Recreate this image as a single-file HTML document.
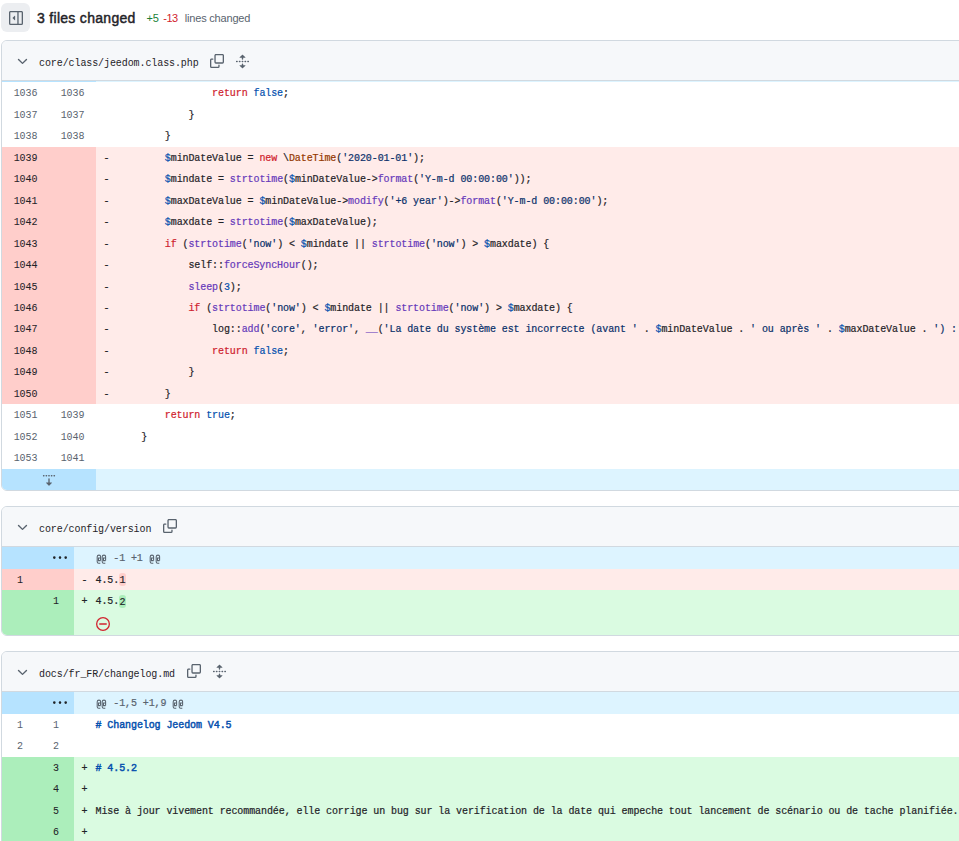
<!DOCTYPE html>
<html><head><meta charset="utf-8"><style>
*{box-sizing:border-box}
html,body{margin:0;padding:0}
body{width:959px;height:841px;overflow:hidden;background:#fff;position:relative;font-family:"Liberation Sans",sans-serif;color:#1f2328}
.tog{position:absolute;left:1px;top:3px;width:29px;height:29px;border-radius:6px;background:#eceef1}
.tog svg{position:absolute;left:8px;top:8px}
.title{position:absolute;left:37px;top:8px;font-size:14px;font-weight:normal;-webkit-text-stroke:0.45px #1f2328;line-height:20px;white-space:nowrap;letter-spacing:0.3px}
.stats{position:absolute;left:146px;top:10px;font-size:11px;line-height:16px;white-space:nowrap}
.stats .p{color:#1a7f37;margin-left:0.6px;letter-spacing:-0.2px} .stats .m{color:#d1242f;margin-left:4.4px;letter-spacing:-0.4px} .stats .l{color:#59636e;margin-left:7px;letter-spacing:-0.2px}
.file{position:absolute;left:1px;width:1400px;border:1px solid #d1d9e0;border-radius:6px;overflow:hidden;background:#fff}
.fh{position:absolute;left:0;top:0;right:0;height:40px;background:#f6f8fa;border-bottom:1px solid #d1d9e0}
.chev{position:absolute;left:12.5px;top:12.6px}
.chev svg{display:block}
.path{position:absolute;left:37px;top:3px;line-height:39px;font-family:"Liberation Mono",monospace;font-size:10px;letter-spacing:-0.09px;white-space:pre;color:#1f2328}
.ico{position:absolute;top:12.2px}
.ico svg{display:block}
.row{position:absolute;left:0;right:0;background:#fff}
.g{position:absolute;left:0;top:0;bottom:0}
.n,.mk,.code{position:absolute;top:1px;-webkit-text-stroke:0.2px currentColor;line-height:21.5px;font-family:"Liberation Mono",monospace;font-size:10px;letter-spacing:-0.09px;white-space:pre}
.n{text-align:center;color:#59636e;-webkit-text-stroke:0}
.code{color:#1f2328}
.mk{color:#1f2328;margin-left:0.5px}
.del{background:#ffebe9} .del .g{background:#ffcecb} .del .n{color:#1f2328;-webkit-text-stroke:0.05px currentColor}
.add{background:#dafbe1} .add .g{background:#aceebb} .add .n{color:#1f2328;-webkit-text-stroke:0.05px currentColor}
.hunk{background:#ddf4ff} .hunk .g{background:#b6e3ff} .hunk .code{color:#59636e}
.kebab{position:absolute;top:3.8px} .kebab svg{display:block}
.fd{position:absolute;left:40px;top:3.2px} .fd svg{display:block}
.k{color:#cf222e} .f{color:#6639ba} .s{color:#0a3069} .v{color:#0550ae} .c{color:#0550ae} .t{color:#953800}
.h{color:#0550ae;font-weight:normal;-webkit-text-stroke:0.45px currentColor}
.at{display:inline-block;width:5.91px;height:10px;vertical-align:-2.5px} .at svg{display:block}
.wd{background:#ffcecb;border-radius:3px;padding:1.5px 0.3px 0.5px} .wa{background:#aceebb;border-radius:3px;padding:1.5px 0.3px 0.5px}
.ne{position:absolute;left:94px;top:27px} .ne svg{display:block}
</style></head>
<body>
<div class="tog"><svg width="14" height="14" viewBox="0 0 16 16"><path fill="#59636e" d="M4.177 7.823 6.573 5.427A.25.25 0 0 1 7 5.604v4.792a.25.25 0 0 1-.427.177L4.177 8.177a.25.25 0 0 1 0-.354Z"/><path fill="#59636e" d="M0 1.75C0 .784.784 0 1.75 0h12.5C15.216 0 16 .784 16 1.75v12.5A1.75 1.75 0 0 1 14.25 16H1.75A1.75 1.75 0 0 1 0 14.25Zm1.75-.25a.25.25 0 0 0-.25.25v12.5c0 .138.112.25.25.25H9.5v-13Zm12.5 13a.25.25 0 0 0 .25-.25V1.75a.25.25 0 0 0-.25-.25H11v13Z"/></svg></div>
<div class="title">3 files changed</div>
<div class="stats"><span class="p">+5</span><span class="m">-13</span><span class="l">lines changed</span></div>
<div class="file" style="top:40px;height:451px"><div class="fh"><span class="chev"><svg width="15" height="15" viewBox="0 0 16 16"><path fill="#59636e" d="M12.78 5.22a.749.749 0 0 1 0 1.06l-4.25 4.25a.749.749 0 0 1-1.06 0L3.22 6.28a.749.749 0 1 1 1.06-1.06L8 8.939l3.72-3.719a.749.749 0 0 1 1.06 0Z"/></svg></span><span class="path">core/class/jeedom.class.php</span><span class="ico" style="left:208.26px;top:13.0px"><svg width="14" height="14" viewBox="0 0 16 16"><path fill="#59636e" d="M0 6.75C0 5.784.784 5 1.75 5h1.5a.75.75 0 0 1 0 1.5h-1.5a.25.25 0 0 0-.25.25v7.5c0 .138.112.25.25.25h7.5a.25.25 0 0 0 .25-.25v-1.5a.75.75 0 0 1 1.5 0v1.5A1.75 1.75 0 0 1 9.25 16h-7.5A1.75 1.75 0 0 1 0 14.25Z"/><path fill="#59636e" d="M5 1.75C5 .784 5.784 0 6.75 0h7.5C15.216 0 16 .784 16 1.75v7.5A1.75 1.75 0 0 1 14.25 11h-7.5A1.75 1.75 0 0 1 5 9.25Zm1.75-.25a.25.25 0 0 0-.25.25v7.5c0 .138.112.25.25.25h7.5a.25.25 0 0 0 .25-.25v-7.5a.25.25 0 0 0-.25-.25Z"/></svg></span><span class="ico" style="left:233.46px;top:12.8px"><svg width="15" height="15" viewBox="0 0 16 16"><path fill="#59636e" d="M8.177.677l2.896 2.896a.25.25 0 0 1-.177.427H8.75v1.25a.75.75 0 0 1-1.5 0V4H5.104a.25.25 0 0 1-.177-.427L7.823.677a.25.25 0 0 1 .354 0ZM7.25 10.75a.75.75 0 0 1 1.5 0V12h2.146a.25.25 0 0 1 .177.427l-2.896 2.896a.25.25 0 0 1-.354 0l-2.896-2.896A.25.25 0 0 1 5.104 12H7.25v-1.25Zm-5-2a.75.75 0 0 0 0-1.5h-.5a.75.75 0 0 0 0 1.5h.5ZM6 8a.75.75 0 0 1-.75.75h-.5a.75.75 0 0 1 0-1.5h.5A.75.75 0 0 1 6 8Zm2.25.75a.75.75 0 0 0 0-1.5h-.5a.75.75 0 0 0 0 1.5h.5ZM12 8a.75.75 0 0 1-.75.75h-.5a.75.75 0 0 1 0-1.5h.5A.75.75 0 0 1 12 8Zm2.25.75a.75.75 0 0 0 0-1.5h-.5a.75.75 0 0 0 0 1.5h.5Z"/></svg></span></div><div class="row hunk" style="top:40px;height:1px"><div class="g" style="width:94px"></div></div><div class="row ctx" style="top:41.000px;height:22.667px"><div class="g" style="width:94px"><span class="n" style="left:0px;width:47.0px">1036</span><span class="n" style="left:47.0px;width:47.0px">1036</span></div><span class="mk" style="left:101px"></span><div class="code" style="left:115.5px">                <span class="k">return</span> <span class="c">false</span>;</div></div><div class="row ctx" style="top:62.667px;height:22.667px"><div class="g" style="width:94px"><span class="n" style="left:0px;width:47.0px">1037</span><span class="n" style="left:47.0px;width:47.0px">1037</span></div><span class="mk" style="left:101px"></span><div class="code" style="left:115.5px">            }</div></div><div class="row ctx" style="top:84.333px;height:22.667px"><div class="g" style="width:94px"><span class="n" style="left:0px;width:47.0px">1038</span><span class="n" style="left:47.0px;width:47.0px">1038</span></div><span class="mk" style="left:101px"></span><div class="code" style="left:115.5px">        }</div></div><div class="row del" style="top:106.000px;height:22.417px"><div class="g" style="width:94px"><span class="n" style="left:0px;width:47.0px">1039</span><span class="n" style="left:47.0px;width:47.0px"></span></div><span class="mk" style="left:101px">-</span><div class="code" style="left:115.5px">        <span class="v">$</span>minDateValue = <span class="k">new</span> \<span class="t">DateTime</span>(<span class="s">'2020-01-01'</span>);</div></div><div class="row del" style="top:127.417px;height:22.417px"><div class="g" style="width:94px"><span class="n" style="left:0px;width:47.0px">1040</span><span class="n" style="left:47.0px;width:47.0px"></span></div><span class="mk" style="left:101px">-</span><div class="code" style="left:115.5px">        <span class="v">$</span>mindate = <span class="f">strtotime</span>(<span class="v">$</span>minDateValue-&gt;<span class="f">format</span>(<span class="s">'Y-m-d 00:00:00'</span>));</div></div><div class="row del" style="top:148.833px;height:22.417px"><div class="g" style="width:94px"><span class="n" style="left:0px;width:47.0px">1041</span><span class="n" style="left:47.0px;width:47.0px"></span></div><span class="mk" style="left:101px">-</span><div class="code" style="left:115.5px">        <span class="v">$</span>maxDateValue = <span class="v">$</span>minDateValue-&gt;<span class="f">modify</span>(<span class="s">'+6 year'</span>)-&gt;<span class="f">format</span>(<span class="s">'Y-m-d 00:00:00'</span>);</div></div><div class="row del" style="top:170.250px;height:22.417px"><div class="g" style="width:94px"><span class="n" style="left:0px;width:47.0px">1042</span><span class="n" style="left:47.0px;width:47.0px"></span></div><span class="mk" style="left:101px">-</span><div class="code" style="left:115.5px">        <span class="v">$</span>maxdate = <span class="f">strtotime</span>(<span class="v">$</span>maxDateValue);</div></div><div class="row del" style="top:191.667px;height:22.417px"><div class="g" style="width:94px"><span class="n" style="left:0px;width:47.0px">1043</span><span class="n" style="left:47.0px;width:47.0px"></span></div><span class="mk" style="left:101px">-</span><div class="code" style="left:115.5px">        <span class="k">if</span> (<span class="f">strtotime</span>(<span class="s">'now'</span>) &lt; <span class="v">$</span>mindate || <span class="f">strtotime</span>(<span class="s">'now'</span>) &gt; <span class="v">$</span>maxdate) {</div></div><div class="row del" style="top:213.083px;height:22.417px"><div class="g" style="width:94px"><span class="n" style="left:0px;width:47.0px">1044</span><span class="n" style="left:47.0px;width:47.0px"></span></div><span class="mk" style="left:101px">-</span><div class="code" style="left:115.5px">            self::<span class="f">forceSyncHour</span>();</div></div><div class="row del" style="top:234.500px;height:22.417px"><div class="g" style="width:94px"><span class="n" style="left:0px;width:47.0px">1045</span><span class="n" style="left:47.0px;width:47.0px"></span></div><span class="mk" style="left:101px">-</span><div class="code" style="left:115.5px">            <span class="f">sleep</span>(<span class="c">3</span>);</div></div><div class="row del" style="top:255.917px;height:22.417px"><div class="g" style="width:94px"><span class="n" style="left:0px;width:47.0px">1046</span><span class="n" style="left:47.0px;width:47.0px"></span></div><span class="mk" style="left:101px">-</span><div class="code" style="left:115.5px">            <span class="k">if</span> (<span class="f">strtotime</span>(<span class="s">'now'</span>) &lt; <span class="v">$</span>mindate || <span class="f">strtotime</span>(<span class="s">'now'</span>) &gt; <span class="v">$</span>maxdate) {</div></div><div class="row del" style="top:277.333px;height:22.417px"><div class="g" style="width:94px"><span class="n" style="left:0px;width:47.0px">1047</span><span class="n" style="left:47.0px;width:47.0px"></span></div><span class="mk" style="left:101px">-</span><div class="code" style="left:115.5px">                log::<span class="f">add</span>(<span class="s">'core'</span>, <span class="s">'error'</span>, <span class="f">__</span>(<span class="s">'La date du système est incorrecte (avant '</span> . <span class="v">$</span>minDateValue . <span class="s">' ou après '</span> . <span class="v">$</span>maxDateValue . <span class="s">') :'</span> . <span class="f">date</span>(<span class="s">'Y-m-d H:i:s'</span>), <span class="s">'jeedom'</span>));</div></div><div class="row del" style="top:298.750px;height:22.417px"><div class="g" style="width:94px"><span class="n" style="left:0px;width:47.0px">1048</span><span class="n" style="left:47.0px;width:47.0px"></span></div><span class="mk" style="left:101px">-</span><div class="code" style="left:115.5px">                <span class="k">return</span> <span class="c">false</span>;</div></div><div class="row del" style="top:320.167px;height:22.417px"><div class="g" style="width:94px"><span class="n" style="left:0px;width:47.0px">1049</span><span class="n" style="left:47.0px;width:47.0px"></span></div><span class="mk" style="left:101px">-</span><div class="code" style="left:115.5px">            }</div></div><div class="row del" style="top:341.583px;height:22.417px"><div class="g" style="width:94px"><span class="n" style="left:0px;width:47.0px">1050</span><span class="n" style="left:47.0px;width:47.0px"></span></div><span class="mk" style="left:101px">-</span><div class="code" style="left:115.5px">        }</div></div><div class="row ctx" style="top:363.000px;height:22.667px"><div class="g" style="width:94px"><span class="n" style="left:0px;width:47.0px">1051</span><span class="n" style="left:47.0px;width:47.0px">1039</span></div><span class="mk" style="left:101px"></span><div class="code" style="left:115.5px">        <span class="k">return</span> <span class="c">true</span>;</div></div><div class="row ctx" style="top:384.667px;height:22.667px"><div class="g" style="width:94px"><span class="n" style="left:0px;width:47.0px">1052</span><span class="n" style="left:47.0px;width:47.0px">1040</span></div><span class="mk" style="left:101px"></span><div class="code" style="left:115.5px">    }</div></div><div class="row ctx" style="top:406.333px;height:22.667px"><div class="g" style="width:94px"><span class="n" style="left:0px;width:47.0px">1053</span><span class="n" style="left:47.0px;width:47.0px">1041</span></div><span class="mk" style="left:101px"></span><div class="code" style="left:115.5px"></div></div><div class="row hunk" style="top:428.000px;height:21.000px"><div class="g" style="width:94px"><span class="fd"><svg width="14" height="14" viewBox="0 0 16 16"><path fill="#59636e" d="m8.177 15.6 3.1-3.1a.25.25 0 0 0-.177-.427H8.75V7.764a.75.75 0 1 0-1.5 0V12.07H4.9a.25.25 0 0 0-.177.427l3.1 3.1a.25.25 0 0 0 .354 0ZM2.25 5a.75.75 0 0 0 0-1.5h-.5a.75.75 0 0 0 0 1.5h.5ZM6 4.25a.75.75 0 0 1-.75.75h-.5a.75.75 0 0 1 0-1.5h.5a.75.75 0 0 1 .75.75ZM8.25 5a.75.75 0 0 0 0-1.5h-.5a.75.75 0 0 0 0 1.5h.5ZM12 4.25a.75.75 0 0 1-.75.75h-.5a.75.75 0 0 1 0-1.5h.5a.75.75 0 0 1 .75.75Zm2.25.75a.75.75 0 0 0 0-1.5h-.5a.75.75 0 0 0 0 1.5h.5Z"/></svg></span></div></div></div><div class="file" style="top:506px;height:130px"><div class="fh"><span class="chev"><svg width="15" height="15" viewBox="0 0 16 16"><path fill="#59636e" d="M12.78 5.22a.749.749 0 0 1 0 1.06l-4.25 4.25a.749.749 0 0 1-1.06 0L3.22 6.28a.749.749 0 1 1 1.06-1.06L8 8.939l3.72-3.719a.749.749 0 0 1 1.06 0Z"/></svg></span><span class="path">core/config/version</span><span class="ico" style="left:161.22px;top:12.2px"><svg width="14" height="14" viewBox="0 0 16 16"><path fill="#59636e" d="M0 6.75C0 5.784.784 5 1.75 5h1.5a.75.75 0 0 1 0 1.5h-1.5a.25.25 0 0 0-.25.25v7.5c0 .138.112.25.25.25h7.5a.25.25 0 0 0 .25-.25v-1.5a.75.75 0 0 1 1.5 0v1.5A1.75 1.75 0 0 1 9.25 16h-7.5A1.75 1.75 0 0 1 0 14.25Z"/><path fill="#59636e" d="M5 1.75C5 .784 5.784 0 6.75 0h7.5C15.216 0 16 .784 16 1.75v7.5A1.75 1.75 0 0 1 14.25 11h-7.5A1.75 1.75 0 0 1 5 9.25Zm1.75-.25a.25.25 0 0 0-.25.25v7.5c0 .138.112.25.25.25h7.5a.25.25 0 0 0 .25-.25v-7.5a.25.25 0 0 0-.25-.25Z"/></svg></span></div><div class="row hunk" style="top:40.000px;height:22.667px"><div class="g" style="width:72px"><span class="kebab" style="left:51.20px"><svg width="14" height="14" viewBox="0 0 16 16"><path fill="#1f2328" d="M8 9a1.5 1.5 0 1 0 0-3 1.5 1.5 0 0 0 0 3ZM1.5 9a1.5 1.5 0 1 0 0-3 1.5 1.5 0 0 0 0 3Zm13 0a1.5 1.5 0 1 0 0-3 1.5 1.5 0 0 0 0 3Z"/></svg></span></div><div class="code" style="left:93.5px"><span class="at"><svg width="6" height="10" viewBox="0 0 6 10"><path d="M4.6 6.6V2.6Q4.6 1.1 3 1.1Q1.2 1.1 1.2 2.8V7.8Q1.2 9.3 2.7 9.3H4.3M4.6 4H2.5V6.6H4.6" fill="none" stroke="#59636e" stroke-width="1.05"/></svg></span><span class="at"><svg width="6" height="10" viewBox="0 0 6 10"><path d="M4.6 6.6V2.6Q4.6 1.1 3 1.1Q1.2 1.1 1.2 2.8V7.8Q1.2 9.3 2.7 9.3H4.3M4.6 4H2.5V6.6H4.6" fill="none" stroke="#59636e" stroke-width="1.05"/></svg></span> -1 +1 <span class="at"><svg width="6" height="10" viewBox="0 0 6 10"><path d="M4.6 6.6V2.6Q4.6 1.1 3 1.1Q1.2 1.1 1.2 2.8V7.8Q1.2 9.3 2.7 9.3H4.3M4.6 4H2.5V6.6H4.6" fill="none" stroke="#59636e" stroke-width="1.05"/></svg></span><span class="at"><svg width="6" height="10" viewBox="0 0 6 10"><path d="M4.6 6.6V2.6Q4.6 1.1 3 1.1Q1.2 1.1 1.2 2.8V7.8Q1.2 9.3 2.7 9.3H4.3M4.6 4H2.5V6.6H4.6" fill="none" stroke="#59636e" stroke-width="1.05"/></svg></span></div></div><div class="row del" style="top:61.667px;height:21.417px"><div class="g" style="width:72px"><span class="n" style="left:0px;width:36px">1</span></div><span class="mk" style="left:79px">-</span><div class="code" style="left:93.5px">4.5.<span class="wd">1</span></div></div><div class="row add" style="top:83.083px;height:44.917px"><div class="g" style="width:72px"><span class="n" style="left:36px;width:36px">1</span></div><span class="mk" style="left:79px">+</span><div class="code" style="left:93.5px">4.5.<span class="wa">2</span></div><span class="ne"><svg width="14" height="14" viewBox="0 0 16 16"><path fill="#d1242f" d="M4.25 7.25a.75.75 0 0 0 0 1.5h7.5a.75.75 0 0 0 0-1.5h-7.5Z"/><path fill="#d1242f" d="M16 8A8 8 0 1 1 0 8a8 8 0 0 1 16 0Zm-1.5 0a6.5 6.5 0 1 0-13 0 6.5 6.5 0 0 0 13 0Z"/></svg></span></div></div><div class="file" style="top:651px;height:400px"><div class="fh"><span class="chev"><svg width="15" height="15" viewBox="0 0 16 16"><path fill="#59636e" d="M12.78 5.22a.749.749 0 0 1 0 1.06l-4.25 4.25a.749.749 0 0 1-1.06 0L3.22 6.28a.749.749 0 1 1 1.06-1.06L8 8.939l3.72-3.719a.749.749 0 0 1 1.06 0Z"/></svg></span><span class="path">docs/fr_FR/changelog.md</span><span class="ico" style="left:184.74px;top:12.2px"><svg width="14" height="14" viewBox="0 0 16 16"><path fill="#59636e" d="M0 6.75C0 5.784.784 5 1.75 5h1.5a.75.75 0 0 1 0 1.5h-1.5a.25.25 0 0 0-.25.25v7.5c0 .138.112.25.25.25h7.5a.25.25 0 0 0 .25-.25v-1.5a.75.75 0 0 1 1.5 0v1.5A1.75 1.75 0 0 1 9.25 16h-7.5A1.75 1.75 0 0 1 0 14.25Z"/><path fill="#59636e" d="M5 1.75C5 .784 5.784 0 6.75 0h7.5C15.216 0 16 .784 16 1.75v7.5A1.75 1.75 0 0 1 14.25 11h-7.5A1.75 1.75 0 0 1 5 9.25Zm1.75-.25a.25.25 0 0 0-.25.25v7.5c0 .138.112.25.25.25h7.5a.25.25 0 0 0 .25-.25v-7.5a.25.25 0 0 0-.25-.25Z"/></svg></span><span class="ico" style="left:209.94px;top:12px"><svg width="15" height="15" viewBox="0 0 16 16"><path fill="#59636e" d="M8.177.677l2.896 2.896a.25.25 0 0 1-.177.427H8.75v1.25a.75.75 0 0 1-1.5 0V4H5.104a.25.25 0 0 1-.177-.427L7.823.677a.25.25 0 0 1 .354 0ZM7.25 10.75a.75.75 0 0 1 1.5 0V12h2.146a.25.25 0 0 1 .177.427l-2.896 2.896a.25.25 0 0 1-.354 0l-2.896-2.896A.25.25 0 0 1 5.104 12H7.25v-1.25Zm-5-2a.75.75 0 0 0 0-1.5h-.5a.75.75 0 0 0 0 1.5h.5ZM6 8a.75.75 0 0 1-.75.75h-.5a.75.75 0 0 1 0-1.5h.5A.75.75 0 0 1 6 8Zm2.25.75a.75.75 0 0 0 0-1.5h-.5a.75.75 0 0 0 0 1.5h.5ZM12 8a.75.75 0 0 1-.75.75h-.5a.75.75 0 0 1 0-1.5h.5A.75.75 0 0 1 12 8Zm2.25.75a.75.75 0 0 0 0-1.5h-.5a.75.75 0 0 0 0 1.5h.5Z"/></svg></span></div><div class="row hunk" style="top:40.000px;height:22.667px"><div class="g" style="width:72px"><span class="kebab" style="left:51.20px"><svg width="14" height="14" viewBox="0 0 16 16"><path fill="#1f2328" d="M8 9a1.5 1.5 0 1 0 0-3 1.5 1.5 0 0 0 0 3ZM1.5 9a1.5 1.5 0 1 0 0-3 1.5 1.5 0 0 0 0 3Zm13 0a1.5 1.5 0 1 0 0-3 1.5 1.5 0 0 0 0 3Z"/></svg></span></div><div class="code" style="left:93.5px"><span class="at"><svg width="6" height="10" viewBox="0 0 6 10"><path d="M4.6 6.6V2.6Q4.6 1.1 3 1.1Q1.2 1.1 1.2 2.8V7.8Q1.2 9.3 2.7 9.3H4.3M4.6 4H2.5V6.6H4.6" fill="none" stroke="#59636e" stroke-width="1.05"/></svg></span><span class="at"><svg width="6" height="10" viewBox="0 0 6 10"><path d="M4.6 6.6V2.6Q4.6 1.1 3 1.1Q1.2 1.1 1.2 2.8V7.8Q1.2 9.3 2.7 9.3H4.3M4.6 4H2.5V6.6H4.6" fill="none" stroke="#59636e" stroke-width="1.05"/></svg></span> -1,5 +1,9 <span class="at"><svg width="6" height="10" viewBox="0 0 6 10"><path d="M4.6 6.6V2.6Q4.6 1.1 3 1.1Q1.2 1.1 1.2 2.8V7.8Q1.2 9.3 2.7 9.3H4.3M4.6 4H2.5V6.6H4.6" fill="none" stroke="#59636e" stroke-width="1.05"/></svg></span><span class="at"><svg width="6" height="10" viewBox="0 0 6 10"><path d="M4.6 6.6V2.6Q4.6 1.1 3 1.1Q1.2 1.1 1.2 2.8V7.8Q1.2 9.3 2.7 9.3H4.3M4.6 4H2.5V6.6H4.6" fill="none" stroke="#59636e" stroke-width="1.05"/></svg></span></div></div><div class="row ctx" style="top:61.667px;height:22.667px"><div class="g" style="width:72px"><span class="n" style="left:0px;width:36.0px">1</span><span class="n" style="left:36.0px;width:36.0px">1</span></div><span class="mk" style="left:79px"></span><div class="code" style="left:93.5px"><span class="h"># Changelog Jeedom V4.5</span></div></div><div class="row ctx" style="top:83.333px;height:22.667px"><div class="g" style="width:72px"><span class="n" style="left:0px;width:36.0px">2</span><span class="n" style="left:36.0px;width:36.0px">2</span></div><span class="mk" style="left:79px"></span><div class="code" style="left:93.5px"></div></div><div class="row add" style="top:105.000px;height:22.417px"><div class="g" style="width:72px"><span class="n" style="left:0px;width:36.0px"></span><span class="n" style="left:36.0px;width:36.0px">3</span></div><span class="mk" style="left:79px">+</span><div class="code" style="left:93.5px"><span class="h"># 4.5.2</span></div></div><div class="row add" style="top:126.417px;height:22.417px"><div class="g" style="width:72px"><span class="n" style="left:0px;width:36.0px"></span><span class="n" style="left:36.0px;width:36.0px">4</span></div><span class="mk" style="left:79px">+</span><div class="code" style="left:93.5px"></div></div><div class="row add" style="top:147.833px;height:22.417px"><div class="g" style="width:72px"><span class="n" style="left:0px;width:36.0px"></span><span class="n" style="left:36.0px;width:36.0px">5</span></div><span class="mk" style="left:79px">+</span><div class="code" style="left:93.5px">Mise à jour vivement recommandée, elle corrige un bug sur la verification de la date qui empeche tout lancement de scénario ou de tache planifiée.</div></div><div class="row add" style="top:169.250px;height:22.417px"><div class="g" style="width:72px"><span class="n" style="left:0px;width:36.0px"></span><span class="n" style="left:36.0px;width:36.0px">6</span></div><span class="mk" style="left:79px">+</span><div class="code" style="left:93.5px"></div></div></div>
</body></html>
